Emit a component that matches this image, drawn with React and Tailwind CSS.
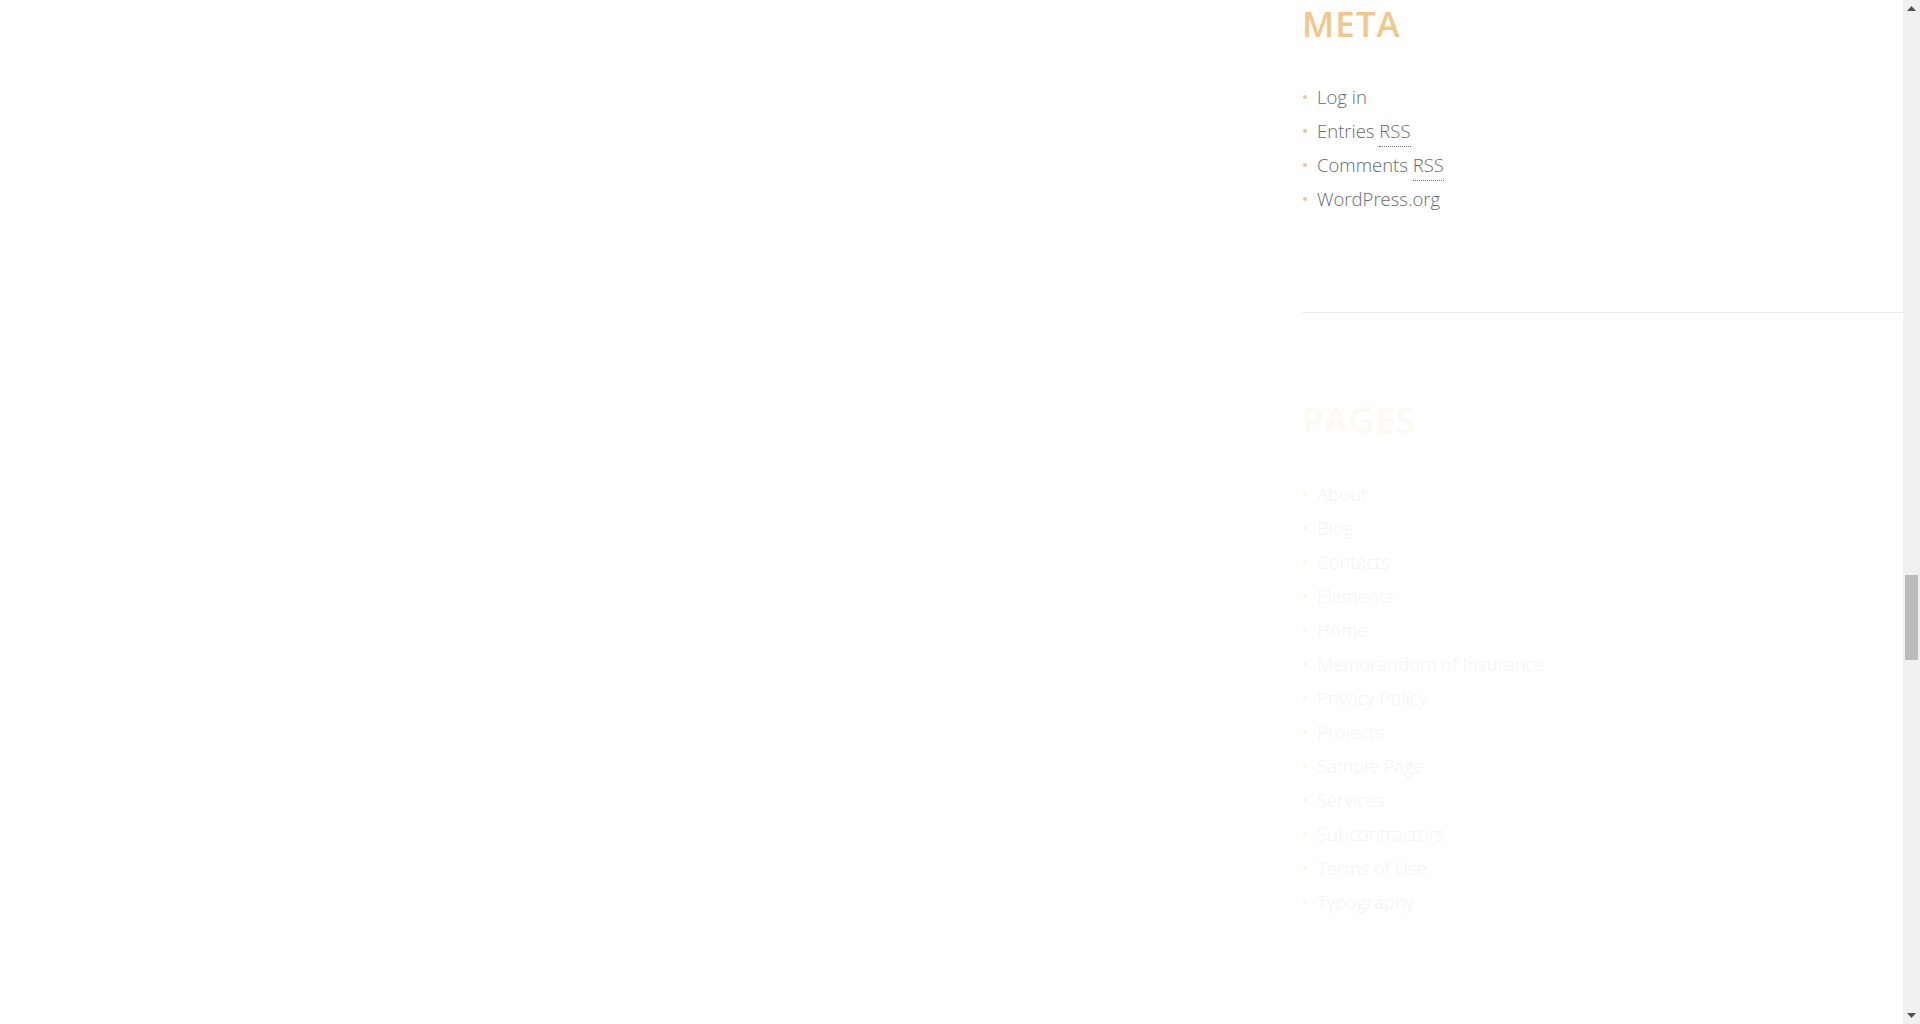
import React from "react";

const meta = [
  { t: "Log in" },
  { t: "Entries", rss: true },
  { t: "Comments", rss: true },
  { t: "WordPress.org" },
];

const pages = [
  "About",
  "Blog",
  "Contacts",
  "Elements",
  "Home",
  "Memorandum of Insurance",
  "Privacy Policy",
  "Projects",
  "Sample Page",
  "Services",
  "Subcontractors",
  "Terms of Use",
  "Typography",
];

function Item({ children, faded }) {
  return (
    <li className="flex items-center h-[34px]">
      <span
        className={
          "w-[4px] h-[4px] rounded-full ml-[1px] mr-[10px] " +
          (faded ? "bg-[#fdf2e4]" : "bg-[#f0c88c]")
        }
      />
      <span className={faded ? "text-[#f3f3f3]" : "text-[#6a6a6a]"}>{children}</span>
    </li>
  );
}

export default function App() {
  return (
    <div
      className="w-full h-[1024px] flex overflow-hidden bg-white"
      style={{ fontFamily: "'Open Sans', 'Noto Sans', sans-serif" }}
    >
      <div className="flex-1 flex">
        <div className="flex-1" />
        <aside className="w-[601px]">
          <h2 className="text-[35px] leading-[48px] font-semibold text-[#f0c88c] tracking-[1px]">
            META
          </h2>
          <ul className="mt-[32px] text-[18.5px] font-light">
            {meta.map((m) => (
              <Item key={m.t}>
                {m.t}
                {m.rss && (
                  <>
                    {" "}
                    <span className="border-b border-dotted border-[#777] pb-[3px]">RSS</span>
                  </>
                )}
              </Item>
            ))}
          </ul>
          <div className="mt-[96px] h-px bg-[#ebebeb]" />
          <h2 className="mt-[83px] text-[35px] leading-[48px] font-semibold text-[#fdf8f1] tracking-[1px]">
            PAGES
          </h2>
          <ul className="mt-[33px] text-[18.5px] font-light">
            {pages.map((p) => (
              <Item key={p} faded>
                {p}
              </Item>
            ))}
          </ul>
        </aside>
      </div>
      <div className="w-[17px] bg-[#f0f0f0] flex flex-col items-center">
        <div className="h-[17px] flex items-center justify-center">
          <svg width="9" height="5" viewBox="0 0 9 5">
            <polygon points="4.5,0 9,5 0,5" fill="#505050" />
          </svg>
        </div>
        <div className="flex-1 w-full relative">
          <div className="absolute left-[2px] right-[2px] top-[558px] h-[85px] bg-[#bcbcbc]" />
        </div>
        <div className="h-[17px] flex items-center justify-center">
          <svg width="9" height="5" viewBox="0 0 9 5">
            <polygon points="0,0 9,0 4.5,5" fill="#505050" />
          </svg>
        </div>
      </div>
    </div>
  );
}
